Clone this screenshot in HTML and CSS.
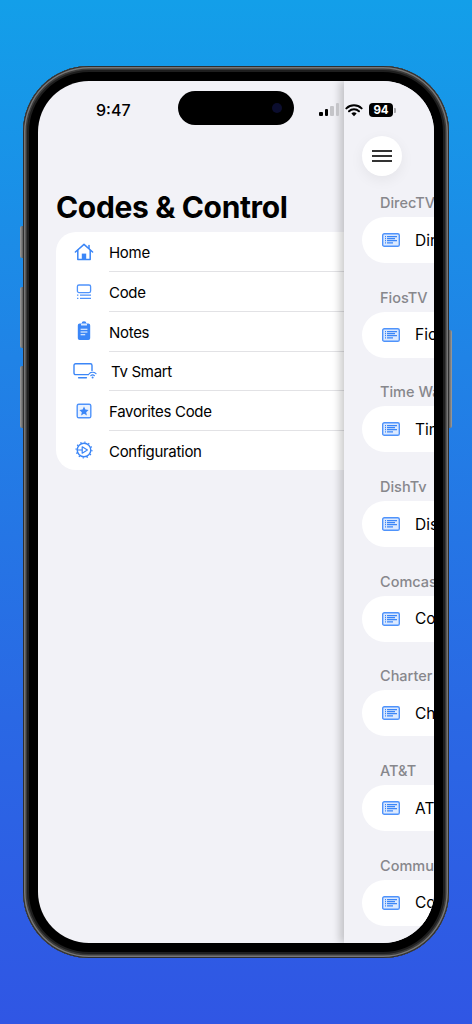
FILE: index.html
```html
<!DOCTYPE html>
<html lang="en">
<head>
    <meta charset="UTF-8">
    <meta name="viewport" content="width=device-width, initial-scale=1.0">
    <title>Codes &amp; Control</title>
    <link rel="stylesheet" href="styles.css">
</head>
<body>

<svg class="sprites" width="0" height="0">
    <symbol id="code-list" viewBox="0 0 18 14">
        <rect x="0.7" y="0.7" width="16.6" height="12.6" rx="1.6" fill="#dce9fe" stroke="#4f93fb" stroke-width="1.4"/>
        <path d="M3 3.6h1M3 5.6h1M3 7.6h1M3 9.9h1M5 3.6h10M5 5.6h8M5 7.6h10M5 9.9h6" stroke="#3b86f7" stroke-width="1.1" fill="none"/>
    </symbol>
</svg>

<div class="phone">
    <span class="side-btn mute"></span>
    <span class="side-btn vol-up"></span>
    <span class="side-btn vol-down"></span>
    <span class="side-btn power"></span>

    <div class="screen">
        <div class="status-time">9:47</div>
        <div class="island"><span class="camera"></span></div>

        <!-- Menu -->
        <div class="menu">
            <h1 class="menu-title">Codes &amp; Control</h1>
            <ul class="menu-list">
                <li class="menu-row">
                    <svg class="menu-icon" viewBox="0 0 20 18" width="20" height="18" fill="none" stroke="#3b86f7" stroke-width="1.5" stroke-linejoin="round" stroke-linecap="round">
                        <path d="M1.4 9 10 1.4 18.6 9"/>
                        <path d="M15 5.2V2.4"/>
                        <path d="M3.8 7.6V16.6H16.2V7.6"/>
                        <rect x="7.8" y="10.6" width="4.4" height="6" fill="#3b86f7" stroke="none"/>
                    </svg>
                    <span class="menu-text">Home</span>
                </li>
                <li class="menu-row">
                    <svg class="menu-icon" viewBox="0 0 20 18" width="20" height="18" fill="none" stroke="#4f93fb" stroke-width="1.3">
                        <rect x="3.4" y="2" width="13.2" height="7.6" rx="1.6"/>
                        <path d="M3 12.2h1.4M6 12.2h11M3 15.4h1.4M6 15.4h11"/>
                    </svg>
                    <span class="menu-text">Code</span>
                </li>
                <li class="menu-row">
                    <svg class="menu-icon" viewBox="0 0 20 20" width="20" height="20">
                        <path d="M5.6 2.6H7.6A2.4 2.4 0 0 1 12.4 2.6H14.4A1.8 1.8 0 0 1 16.2 4.4V17.2A1.8 1.8 0 0 1 14.4 19H5.6A1.8 1.8 0 0 1 3.8 17.2V4.4A1.8 1.8 0 0 1 5.6 2.6Z" fill="#3b86f7"/>
                        <rect x="7" y="2.6" width="6" height="2" rx="0.6" fill="#dce9fe"/>
                        <path d="M6.6 8.2h6.8M6.6 11h6.8M6.6 13.8h4.6" stroke="#fff" stroke-width="1.1" fill="none"/>
                    </svg>
                    <span class="menu-text">Notes</span>
                </li>
                <li class="menu-row">
                    <svg class="menu-icon wide" viewBox="0 0 24 16" width="24" height="16" fill="none" stroke="#3b86f7" stroke-width="1.4" stroke-linecap="round">
                        <path d="M15.6 11.6H2.6A1.6 1.6 0 0 1 1 10V2.4A1.6 1.6 0 0 1 2.6 0.8H17.4A1.6 1.6 0 0 1 19 2.4V7.6"/>
                        <path d="M5.6 14.8h7.8"/>
                        <path d="M16.2 10.6a5 5 0 0 1 6.8 0M17.8 12.6a2.8 2.8 0 0 1 3.6 0" stroke-width="1.2"/>
                        <circle cx="19.6" cy="14.6" r="1" fill="#3b86f7" stroke="none"/>
                    </svg>
                    <span class="menu-text tv">Tv Smart</span>
                </li>
                <li class="menu-row">
                    <svg class="menu-icon" viewBox="0 0 20 18" width="20" height="18">
                        <rect x="3.2" y="2.2" width="13.6" height="13.6" rx="1.6" fill="#eaf2fe" stroke="#4f93fb" stroke-width="1.4"/>
                        <path d="M10 4.6 11.4 7.6 14.6 8 12.2 10.2 12.9 13.4 10 11.8 7.1 13.4 7.8 10.2 5.4 8 8.6 7.6Z" fill="#3b86f7"/>
                    </svg>
                    <span class="menu-text">Favorites Code</span>
                </li>
                <li class="menu-row">
                    <svg class="menu-icon" viewBox="0 0 20 20" width="20" height="20" fill="none" stroke="#3b86f7">
                        <circle cx="10" cy="10" r="6.8" stroke-width="1.4"/>
                        <circle cx="10" cy="10" r="7.9" stroke-width="1.2" stroke-dasharray="1.4 2.74"/>
                        <path d="M8.2 6.8 13.4 10 8.2 13.2Z" stroke-width="1.2" stroke-linejoin="round"/>
                        <path d="M3.6 10H8.2" stroke-width="1.1"/>
                    </svg>
                    <span class="menu-text">Configuration</span>
                </li>
            </ul>
        </div>

        <!-- Panel que se abre encima del menu -->
        <div class="panel">
            <div class="signal">
                <span class="bar b1"></span><span class="bar b2"></span><span class="bar b3 off"></span><span class="bar b4 off"></span>
            </div>
            <div class="status-right">
                <svg class="wifi" viewBox="0 0 18 13" width="18" height="13" fill="none" stroke="#000" stroke-linecap="round">
                    <path d="M1.4 4.4a11 11 0 0 1 15.2 0" stroke-width="2"/>
                    <path d="M4 7.3a7.2 7.2 0 0 1 10 0" stroke-width="2"/>
                    <path d="M9 12.2 6.4 9.6a3.6 3.6 0 0 1 5.2 0Z" fill="#000" stroke="none"/>
                </svg>
                <span class="battery">94</span><span class="battery-tip"></span>
            </div>

            <div class="menu-btn">
                <span class="line"></span><span class="line"></span><span class="line"></span>
            </div>

            <div class="section">
                <div class="section-name">DirecTV</div>
                <div class="pill"><svg class="pill-icon" width="18" height="14"><use href="#code-list"/></svg><span class="pill-text">DirecTV</span></div>
            </div>
            <div class="section">
                <div class="section-name">FiosTV</div>
                <div class="pill"><svg class="pill-icon" width="18" height="14"><use href="#code-list"/></svg><span class="pill-text">FiosTV</span></div>
            </div>
            <div class="section">
                <div class="section-name">Time Warner</div>
                <div class="pill"><svg class="pill-icon" width="18" height="14"><use href="#code-list"/></svg><span class="pill-text">Time Warner</span></div>
            </div>
            <div class="section">
                <div class="section-name">DishTv</div>
                <div class="pill"><svg class="pill-icon" width="18" height="14"><use href="#code-list"/></svg><span class="pill-text">DishTv</span></div>
            </div>
            <div class="section">
                <div class="section-name">Comcast</div>
                <div class="pill"><svg class="pill-icon" width="18" height="14"><use href="#code-list"/></svg><span class="pill-text">Comcast</span></div>
            </div>
            <div class="section">
                <div class="section-name">Charter</div>
                <div class="pill"><svg class="pill-icon" width="18" height="14"><use href="#code-list"/></svg><span class="pill-text">Charter</span></div>
            </div>
            <div class="section">
                <div class="section-name">AT&amp;T</div>
                <div class="pill"><svg class="pill-icon" width="18" height="14"><use href="#code-list"/></svg><span class="pill-text">AT&amp;T</span></div>
            </div>
            <div class="section">
                <div class="section-name">Community</div>
                <div class="pill"><svg class="pill-icon" width="18" height="14"><use href="#code-list"/></svg><span class="pill-text">Community</span></div>
            </div>
        </div>
    </div>
</div>

</body>
</html>
```

FILE: styles.css
```css
html, body {
    margin: 0;
    padding: 0;
}
body {
    width: 472px;
    height: 1024px;
    overflow: hidden;
    display: flex;
    justify-content: center;
    align-items: flex-start;
    background: linear-gradient(180deg, #139fe9 0%, #2083e6 35%, #2a68e4 70%, #3056e4 100%);
    font-family: Inter, "Liberation Sans", sans-serif;
    color: #000;
}
.sprites {
    display: none;
}

/* Phone */
.phone {
    position: relative;
    box-sizing: border-box;
    width: 426px;
    height: 892px;
    margin-top: 66px;
    padding: 15px;
    border-radius: 66px;
    background: #000;
    box-shadow: inset 0 0 0 1px #2e2e2e, inset 0 0 0 2.5px #767676, inset 0 0 0 4px #3a3a3a, inset 0 0 0 6px #1e1e1e;
}
.side-btn {
    position: absolute;
    width: 3px;
    background: linear-gradient(90deg, #a0a0a0, #5a5a5a);
    border-radius: 2px 0 0 2px;
}
.mute {
    left: -3px;
    top: 160px;
    height: 32px;
}
.vol-up {
    left: -3px;
    top: 221px;
    height: 61px;
}
.vol-down {
    left: -3px;
    top: 300px;
    height: 62px;
}
.power {
    right: -3px;
    left: auto;
    top: 264px;
    height: 98px;
    border-radius: 0 2px 2px 0;
    background: linear-gradient(270deg, #a0a0a0, #5a5a5a);
}
.screen {
    position: relative;
    width: 396px;
    height: 862px;
    border-radius: 51px;
    overflow: hidden;
    background: #f2f2f7;
}
.status-time {
    position: absolute;
    left: 58px;
    top: 20px;
    font-size: 16px;
    line-height: 19px;
    font-weight: 500;
}
.island {
    position: absolute;
    left: 140px;
    top: 10px;
    width: 116px;
    height: 34px;
    border-radius: 17px;
    background: #000;
}
.camera {
    position: absolute;
    right: 12px;
    top: 12px;
    width: 10px;
    height: 10px;
    border-radius: 50%;
    background: #0b0d2e;
}

/* Menu */
.menu {
    box-sizing: border-box;
    width: 340px;
    padding: 108px 0 0 18px;
}
.menu-title {
    margin: 0 0 6px;
    font-size: 30px;
    line-height: 37px;
    font-weight: 700;
    letter-spacing: -0.35px;
    white-space: nowrap;
}
.menu-list {
    list-style: none;
    margin: 0;
    padding: 0;
    background: #fff;
    border-radius: 20px 0 0 20px;
}
.menu-row {
    position: relative;
    display: flex;
    align-items: center;
    height: 39.7px;
    padding-left: 18px;
    font-size: 15px;
    letter-spacing: -0.3px;
}
.menu-row + .menu-row::before {
    content: "";
    position: absolute;
    left: 53px;
    right: 0;
    top: -0.5px;
    height: 1px;
    background: #e2e2e5;
}
.menu-icon {
    flex: none;
    width: 20px;
    margin-right: 15px;
}
.menu-icon.wide {
    width: 24px;
    margin-left: -1px;
    margin-right: 14px;
}
.menu-text {
    padding-top: 2px;
}

/* Panel */
.panel {
    position: absolute;
    left: 306px;
    top: 0;
    bottom: 0;
    width: 90px;
    box-sizing: border-box;
    padding: 55px 0 0 18px;
    background: #f2f2f7;
    box-shadow: -4px 0 8px rgba(0, 0, 0, 0.2);
    white-space: nowrap;
}
.signal {
    position: absolute;
    left: -25px;
    top: 22px;
    height: 13px;
    display: flex;
    align-items: flex-end;
    gap: 2px;
    z-index: 1;
}
.bar {
    width: 3.5px;
    border-radius: 1px;
    background: #000;
}
.bar.off {
    background: #c4c4c8;
}
.b1 {
    height: 4px;
}
.b2 {
    height: 7px;
}
.b3 {
    height: 10px;
}
.b4 {
    height: 13px;
}
.status-right {
    position: absolute;
    left: 0;
    top: 22px;
    display: flex;
    align-items: center;
}
.wifi {
    margin-left: 1px;
    margin-right: 6px;
}
.battery {
    width: 24px;
    height: 14px;
    border-radius: 4px;
    background: #000;
    color: #fff;
    font-size: 11.5px;
    line-height: 14px;
    font-weight: 700;
    text-align: center;
}
.battery-tip {
    width: 1.5px;
    height: 5px;
    margin-left: 1px;
    border-radius: 0 1px 1px 0;
    background: #a8a8ac;
}
.menu-btn {
    width: 40px;
    height: 40px;
    border-radius: 50%;
    background: #fff;
    box-shadow: 0 4px 14px rgba(0, 0, 0, 0.06);
    display: flex;
    flex-direction: column;
    align-items: center;
    justify-content: center;
    gap: 3.5px;
}
.line {
    width: 20px;
    height: 1.5px;
    background: #333;
}
.section {
    height: 94.7px;
}
.menu-btn + .section {
    margin-top: 17px;
}
.section-name {
    height: 24px;
    padding-left: 18px;
    font-size: 14.5px;
    line-height: 19px;
    font-weight: 500;
    color: #87878c;
}
.pill {
    display: flex;
    align-items: center;
    width: 140px;
    height: 46px;
    box-sizing: border-box;
    padding-left: 20px;
    border-radius: 23px;
    background: #fff;
    font-size: 15.5px;
}
.pill-icon {
    flex: none;
    margin-right: 15px;
}
```
